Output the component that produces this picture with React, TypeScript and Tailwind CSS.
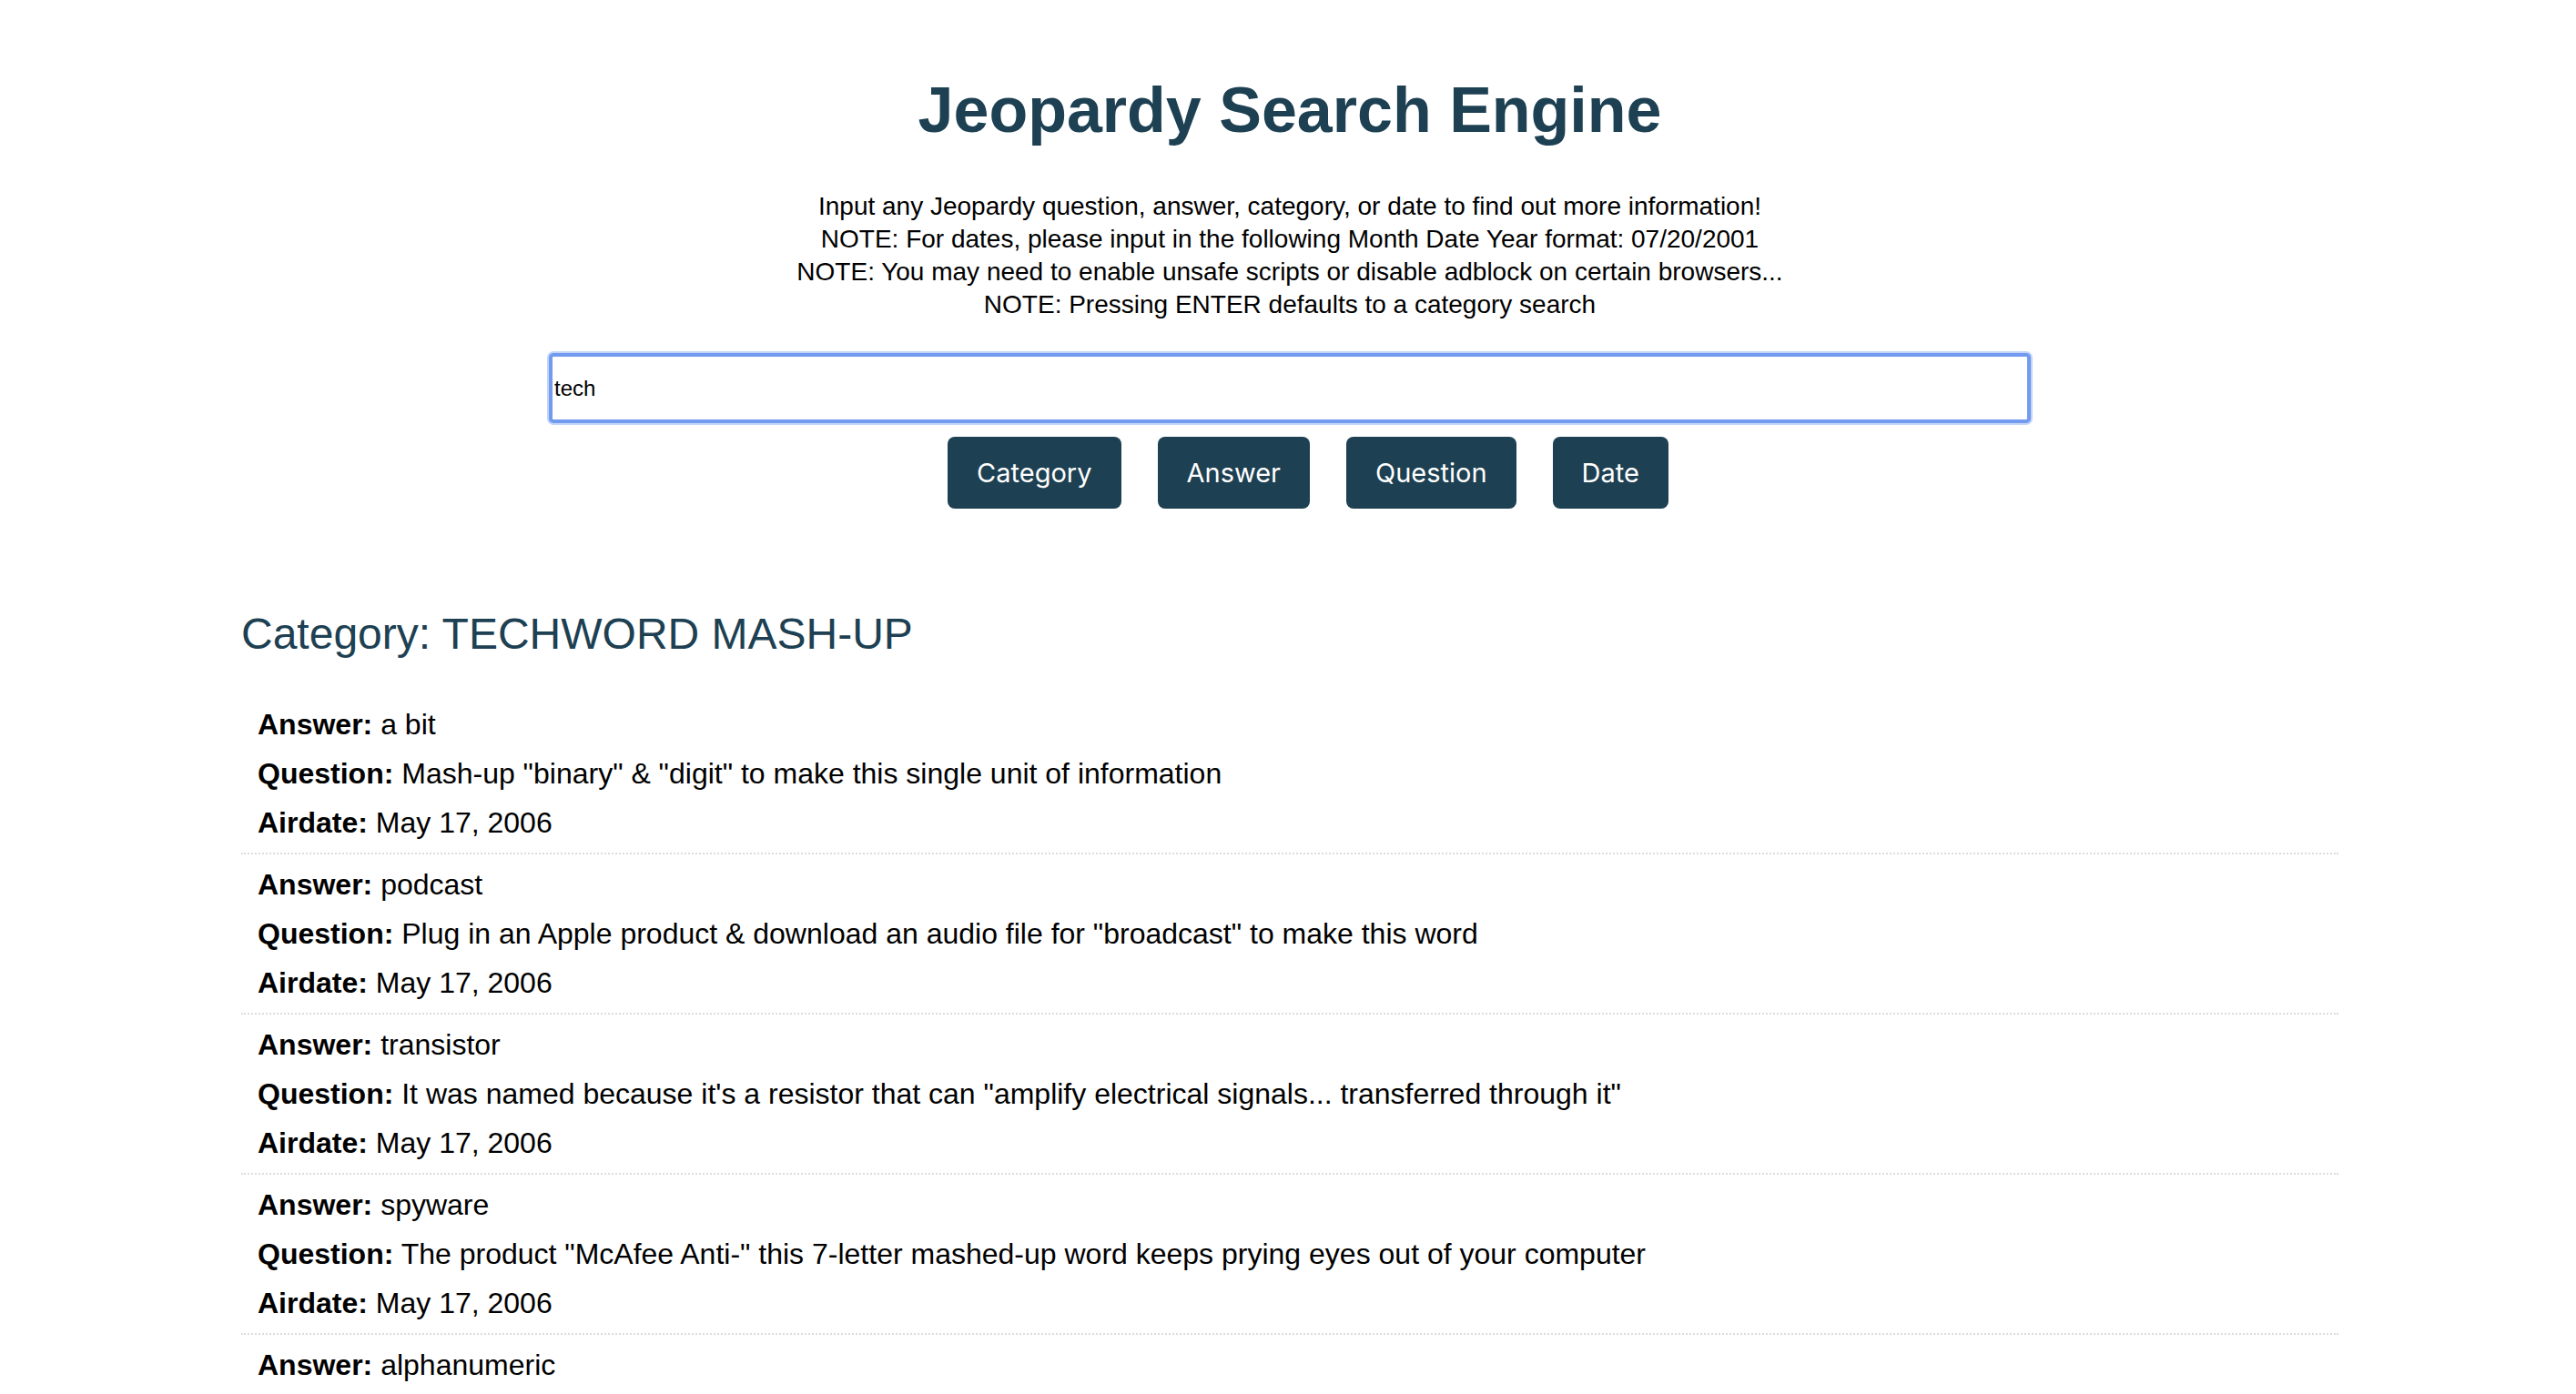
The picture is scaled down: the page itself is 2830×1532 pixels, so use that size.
import React from "react";

const rows = [
  {
    answer: "a bit",
    question: 'Mash-up "binary" & "digit" to make this single unit of information',
    airdate: "May 17, 2006",
  },
  {
    answer: "podcast",
    question: 'Plug in an Apple product & download an audio file for "broadcast" to make this word',
    airdate: "May 17, 2006",
  },
  {
    answer: "transistor",
    question:
      'It was named because it\'s a resistor that can "amplify electrical signals... transferred through it"',
    airdate: "May 17, 2006",
  },
  {
    answer: "spyware",
    question:
      'The product "McAfee Anti-" this 7-letter mashed-up word keeps prying eyes out of your computer',
    airdate: "May 17, 2006",
  },
  {
    answer: "alphanumeric",
    question: "",
    airdate: "May 17, 2006",
  },
];

const buttons = ["Category", "Answer", "Question", "Date"];

export default function App() {
  return (
    <div className="min-h-screen bg-white pl-[4px] font-['Liberation_Sans',Arial,sans-serif] text-black">
      {/* Header */}
      <h1 className="pt-[81px] text-center text-[70px] font-bold leading-[80px] text-[#1d4052]">
        Jeopardy Search Engine
      </h1>

      <p className="mt-[48px] text-center text-[28px] leading-[36px]">
        Input any Jeopardy question, answer, category, or date to find out more information!
        <br />
        NOTE: For dates, please input in the following Month Date Year format: 07/20/2001
        <br />
        NOTE: You may need to enable unsafe scripts or disable adblock on certain browsers...
        <br />
        NOTE: Pressing ENTER defaults to a category search
      </p>

      {/* Search */}
      <div className="mt-[35px] flex justify-center">
        <input
          type="text"
          defaultValue="tech"
          className="h-[77px] w-[1628px] rounded-[5px] border-[4px] border-[#729aee] bg-white pl-[2px] text-[24px] text-black shadow-[0_0_0_2px_#c2d4f9] outline-none"
        />
      </div>

      <div className="mt-[15px] flex justify-center">
        {buttons.map((b) => (
          <button
            key={b}
            className="ml-[40px] h-[79px] rounded-[8px] bg-[#1d4052] px-[32px] font-['Inter',sans-serif] text-[29px] text-white"
          >
            {b}
          </button>
        ))}
      </div>

      {/* Results */}
      <div className="mx-auto mt-[110px] w-[2304px] pb-[40px]">
        <h2 className="text-[48px] leading-[56px] text-[#1d4052]">
          Category: TECHWORD MASH-UP
        </h2>
        <div className="mt-[38px]">
          {rows.map((r, i) => (
            <div
              key={i}
              className="border-b-2 border-dotted border-[#dcdcdc] px-[18px] py-[6px] text-[32px] leading-[54px]"
            >
              <div>
                <span className="font-bold">Answer:</span> {r.answer}
              </div>
              {r.question && (
                <div>
                  <span className="font-bold">Question:</span> {r.question}
                </div>
              )}
              <div>
                <span className="font-bold">Airdate:</span> {r.airdate}
              </div>
            </div>
          ))}
        </div>
      </div>
    </div>
  );
}
